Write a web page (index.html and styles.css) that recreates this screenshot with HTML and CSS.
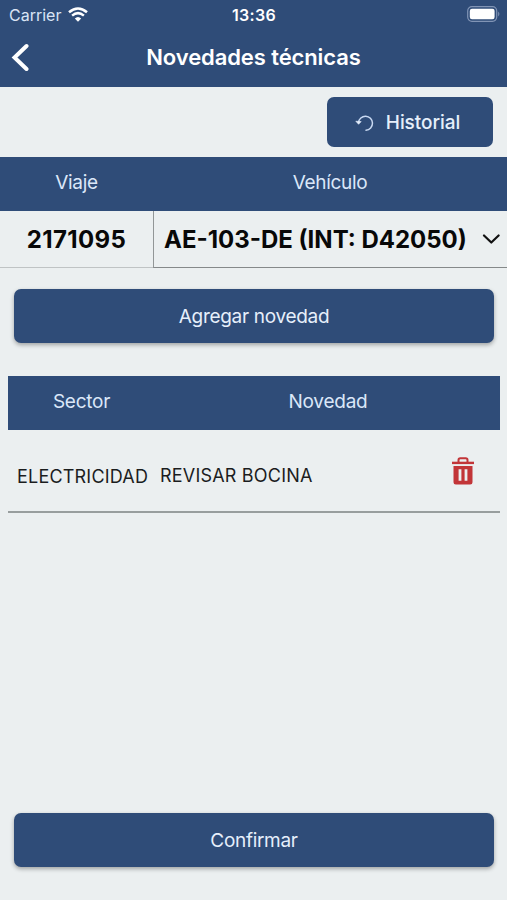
FILE: index.html
```
<!DOCTYPE html>
<html lang="es">
<head>
<meta charset="utf-8">
<title>Novedades técnicas</title>
<link rel="stylesheet" href="styles.css">
</head>
<body>
<header class="top">
  <div class="status">
    <div class="carrier"><span class="carrier-name">Carrier</span>
      <svg class="wifi" viewBox="0 0 20 15" width="20" height="15" fill="none" stroke="#fff" stroke-width="2.5"><path d="M1 5.3Q10-2.4 19 5.3M4.1 8.6Q10 3.7 15.9 8.6"/><path d="M6.8 11.4Q10 8.4 13.2 11.4L10 14.8Z" fill="#fff" stroke="none"/></svg>
    </div>
    <span class="time">13:36</span>
    <svg class="battery" viewBox="0 0 33 16" width="33" height="16"><rect x=".7" y=".7" width="29" height="14.6" rx="4.2" fill="none" stroke="#8194b5" stroke-width="1.2"/><rect x="2.8" y="2.8" width="24.8" height="10.4" rx="2.2" fill="#fff"/><path d="M31.2 5.5Q33.6 8 31.2 10.5Z" fill="#8194b5"/></svg>
  </div>
  <div class="nav">
    <svg class="back" viewBox="0 0 18 30" width="18" height="30"><path d="M15.500 3L3.500 14.500 15.500 26" fill="none" stroke="#fff" stroke-width="4" stroke-linecap="round" stroke-linejoin="miter"/></svg>
    <h1 class="title">Novedades técnicas</h1>
  </div>
</header>
<main class="content">
  <div class="toolbar">
    <button class="history">
      <svg viewBox="0 0 20 18" width="20" height="18"><path d="M3.5 8.6A7 7 0 1 1 11 16.2" fill="none" stroke="#c9d9f2" stroke-width="1.5" stroke-linecap="round"/><path d="M.8 7.2L6.2 7.6 3.6 10.3Z" fill="#e4eefc" stroke="#e4eefc" stroke-width=".6"/></svg>
      <span>Historial</span>
    </button>
  </div>
  <section class="trip">
    <div class="trip-head"><span class="viaje">Viaje</span><span class="vehiculo">Vehículo</span></div>
    <div class="trip-row">
      <div class="trip-number"><span>2171095</span></div>
      <div class="vehicle"><span>AE-103-DE (INT: D42050)</span>
        <svg viewBox="0 0 18 11" width="18" height="11"><path d="M2 1.500L9.300 8.500 16.600 1.500" fill="none" stroke="#111" stroke-width="2.2" stroke-linecap="round" stroke-linejoin="round"/></svg>
      </div>
    </div>
  </section>
  <button class="action"><span class="add-label">Agregar novedad</span></button>
  <section class="list">
    <div class="list-head"><span class="sector">Sector</span><span class="novedad">Novedad</span></div>
    <div class="list-row">
      <span class="cell-sector">ELECTRICIDAD</span>
      <span class="cell-novedad">REVISAR BOCINA</span>
      <svg class="trash" viewBox="0 0 22 28" width="22" height="28"><path d="M6.5 5V3Q6.500 1.200 8.300 1.200H13.700Q15.500 1.200 15.500 3V5" fill="none" stroke="#c23538" stroke-width="2"/><path d="M0 4.700H22V7.100H0Z" fill="#c23538"/><path d="M1.500 9H20.500V25.200Q20.500 27.500 18.200 27.500H3.800Q1.500 27.500 1.500 25.200ZM6.600 12.300V23.800H9.400V12.300ZM12.600 12.300V23.800H15.400V12.300Z" fill="#c23538" fill-rule="evenodd"/></svg>
    </div>
  </section>
  <button class="action confirm"><span class="confirm-label">Confirmar</span></button>
</main>
</body>
</html>
```
FILE: styles.css
```
* { box-sizing: border-box; }
body {
  margin: 0;
  height: 900px;
  display: flex;
  flex-direction: column;
  background: #ebeff0;
  color: #080808;
  font-family: Inter, "Liberation Sans", sans-serif;
  overflow: hidden;
}
svg { display: block; flex: none; }
span { white-space: nowrap; }
button {
  border: 0;
  padding: 0;
  background: #2f4c78;
  color: #e6effb;
  font: 400 19px/24px Inter, "Liberation Sans", sans-serif;
  border-radius: 7px;
}
.top { height: 87px; background: #2f4c78; color: #fff; }
.status {
  display: grid;
  grid-template-columns: 1fr auto 1fr;
  height: 29px;
  padding: 0 8px 0 9px;
  align-items: center;
}
.carrier { display: flex; align-items: center; gap: 7px; }
.carrier-name { font-size: 16px; color: #d9e4f5; }
.time { font-size: 16px; font-weight: 600; letter-spacing: 0.3px; }
.battery { justify-self: end; margin-top: -1px; margin-right: -1px; }
.nav {
  display: grid;
  grid-template-columns: 40px 1fr 40px;
  height: 57px;
  align-items: center;
}
.back { margin-left: 11px; }
.title { margin: -2px 0 0; text-align: center; font-size: 22px; font-weight: 600; line-height: 28px; letter-spacing: -0.1px; }
.content { flex: 1; display: flex; flex-direction: column; }
.toolbar { display: flex; justify-content: flex-end; height: 70px; padding: 10px 14px 0 0; }
.history {
  display: flex;
  align-items: center;
  justify-content: center;
  gap: 11px;
  width: 166px;
  height: 50px;
  padding: 2px 5px 0 0;
  font-weight: 500;
  letter-spacing: -0.05px;
}
.trip-head, .trip-row { display: grid; grid-template-columns: 153px 1fr; }
.trip-head {
  height: 54px;
  padding-bottom: 3px;
  align-items: center;
  justify-items: center;
  background: #2f4c78;
  color: #dbe7f8;
  font-size: 19px;
  letter-spacing: -0.3px;
}
.trip-row { height: 57px; font-size: 24px; font-weight: 700; }
.trip-number { display: flex; align-items: center; justify-content: center; padding-top: 1px; letter-spacing: 0.4px; border-bottom: 1px solid #bfc3c4; }
.vehicle {
  display: flex;
  align-items: center;
  justify-content: space-between;
  padding: 0 7px 0 10px;
  border-left: 1px solid #929697;
  border-bottom: 1px solid #85898a;
}
.action {
  height: 54px;
  flex: none;
  margin: 21px 13px 0 14px;
  padding-top: 2px;
  letter-spacing: -0.3px;
  box-shadow: 0 2px 4px rgb(0 0 0 / 32%);
}
.list { margin: 33px 7px 0 8px; }
.list-head {
  display: grid;
  grid-template-columns: 147px 346px;
  height: 54px;
  padding-bottom: 3px;
  align-items: center;
  justify-items: center;
  background: #2f4c78;
  color: #dbe7f8;
  font-size: 19px;
  letter-spacing: -0.25px;
}
.list-row {
  display: flex;
  align-items: center;
  height: 83px;
  padding: 0 26px 0 9px;
  border-bottom: 2px solid #989e9e;
  font-size: 18px;
  letter-spacing: 0.2px;
  color: #1b1d1e;
}
.cell-sector { width: 143px; padding-top: 12px; }
.cell-novedad { flex: 1; padding-top: 9px; }
.confirm { margin-top: auto; margin-bottom: 33px; }
```
